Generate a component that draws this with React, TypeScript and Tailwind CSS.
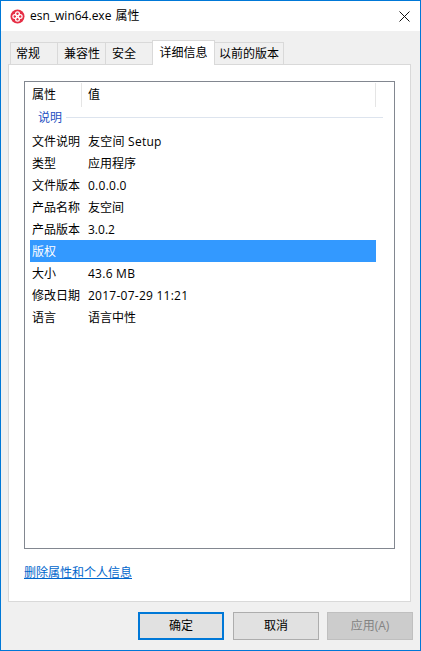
import React from 'react';

const FONT = 'font-["Open_Sans","Noto_Sans_CJK_SC",sans-serif]';

const rows: { label: string; value?: string; selected?: boolean; latin?: boolean }[] = [
  { label: '文件说明', value: '友空间 Setup', latin: true },
  { label: '类型', value: '应用程序' },
  { label: '文件版本', value: '0.0.0.0', latin: true },
  { label: '产品名称', value: '友空间' },
  { label: '产品版本', value: '3.0.2' },
  { label: '版权', selected: true },
  { label: '大小', value: '43.6 MB', latin: true },
  { label: '修改日期', value: '2017-07-29 11:21', latin: true },
  { label: '语言', value: '语言中性' },
];

const tabs = [
  { label: '常规', width: 'w-[47px]', pad: 'pl-[5px]' },
  { label: '兼容性', width: 'w-[48px]', pad: 'pl-[6px]' },
  { label: '安全', width: 'w-[47px]', pad: 'pl-[6px]' },
];

function AppIcon() {
  return (
    <svg width="15" height="15" viewBox="0 0 15 15" className="shrink-0">
      <circle cx="7.5" cy="7.5" r="7" fill="#e62e45" />
      <circle cx="7.5" cy="4.8" r="1.9" fill="none" stroke="#fff" strokeWidth="1.25" />
      <circle cx="7.5" cy="10.2" r="1.9" fill="none" stroke="#fff" strokeWidth="1.25" />
      <circle cx="4.8" cy="7.5" r="1.9" fill="none" stroke="#fff" strokeWidth="1.25" />
      <circle cx="10.2" cy="7.5" r="1.9" fill="none" stroke="#fff" strokeWidth="1.25" />
    </svg>
  );
}

function Row({ label, value, selected, latin }: { label: string; value?: string; selected?: boolean; latin?: boolean }) {
  return (
    <div className={`flex h-[22px] w-[346px] items-center pl-[2px] pt-[2px] ${selected ? 'bg-[#3399ff] text-white' : 'text-black'}`}>
      <span className="w-[56px] shrink-0">{label}</span>
      <span className={latin ? 'tracking-[0.25px]' : ''}>{value}</span>
    </div>
  );
}

export default function App() {
  return (
    <div className={`${FONT} flex h-[651px] w-[421px] flex-col border border-[#0078d7] bg-[#f0f0f0] text-[12px] text-black`}>
      {/* Title bar */}
      <div className="flex h-[30px] shrink-0 items-center bg-white pl-[9px] pr-[10px]">
        <AppIcon />
        <span className="ml-[5px] flex-1 text-[12px]">
          esn_win64.exe <span className="ml-px">属性</span>
        </span>
        <svg width="11" height="11" viewBox="0 0 11 11" stroke="#111" strokeWidth="1" fill="none">
          <path d="M0.5 0.5 L10.5 10.5 M10.5 0.5 L0.5 10.5" />
        </svg>
      </div>

      {/* Tabs */}
      <div className="ml-[9px] mt-[9px] flex h-[24px] shrink-0 items-end">
        {tabs.map((t) => (
          <div
            key={t.label}
            className={`${t.width} ${t.pad} flex h-[22px] items-center border-l border-t border-[#d9d9d9]`}
          >
            {t.label}
          </div>
        ))}
        <div className="relative z-10 -mb-px flex h-[25px] w-[63px] items-center justify-center border-x border-t border-[#d9d9d9] bg-white">
          详细信息
        </div>
        <div className="flex h-[22px] w-[69px] items-center justify-center border-r border-t border-[#d9d9d9]">
          以前的版本
        </div>
      </div>

      {/* Panel */}
      <div className="ml-[7px] flex h-[538px] w-[403px] shrink-0 flex-col border border-[#d9d9d9] bg-white pl-[15px] pt-[16px]">
        <div className="flex h-[468px] w-[371px] flex-col border border-[#828790] pl-[5px]">
          {/* List header */}
          <div className="flex h-[26px] w-[346px] shrink-0 items-center pb-[1px] pl-[2px]">
            <span className="flex h-[24px] w-[50px] items-center border-r border-[#e5e5e5]">属性</span>
            <span className="ml-[6px] flex h-[24px] flex-1 items-center border-r border-[#e5e5e5]">值</span>
          </div>

          {/* Group header */}
          <div className="flex h-[22px] w-[353px] shrink-0 items-center pb-[4px] pl-[8px] text-[#1e4fc2]">
            <span className="pt-[2px]">说明</span>
            <div className="ml-[4px] h-px flex-1 bg-[#dde4ee]" />
          </div>

          <div>
            {rows.map((r) => (
              <Row key={r.label} {...r} />
            ))}
          </div>
        </div>

        <a href="#" onClick={(e) => e.preventDefault()} className="mt-[15px] w-fit text-[#0066cc] underline">
          删除属性和个人信息
        </a>
      </div>

      {/* Buttons */}
      <div className="ml-[137px] mt-[10px] flex gap-[9px]">
        <button className="h-[28px] w-[86px] border-2 border-[#0078d7] bg-[#e1e1e1]">确定</button>
        <button className="h-[28px] w-[86px] border border-[#adadad] bg-[#e1e1e1]">取消</button>
        <button className="-ml-px h-[28px] w-[86px] border border-[#bfbfbf] bg-[#cccccc] text-[#838383]">应用(A)</button>
      </div>
    </div>
  );
}
